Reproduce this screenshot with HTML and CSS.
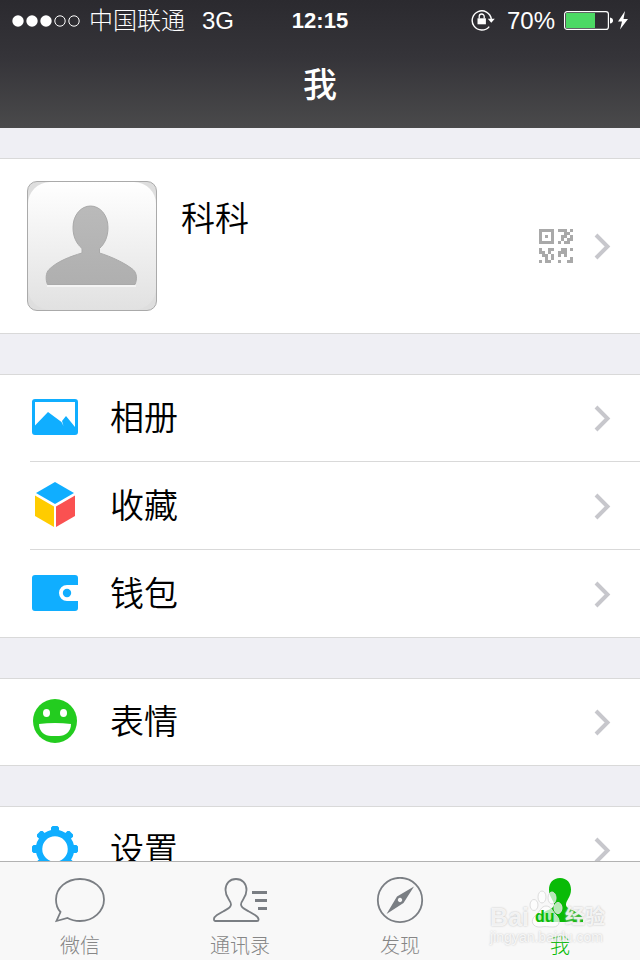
FILE: index.html
```html
<!DOCTYPE html>
<html lang="zh-CN">
<head>
<meta charset="utf-8">
<meta name="viewport" content="width=device-width, initial-scale=1">
<title>我</title>
<link rel="stylesheet" href="styles.css">
</head>
<body>
<header class="top">
  <div class="status">
    <div class="status-left">
      <svg class="signal" viewBox="0 0 68 12" width="68" height="12" aria-hidden="true">
        <g fill="#fff"><circle cx="6" cy="6" r="5.7"/><circle cx="20" cy="6" r="5.7"/><circle cx="34" cy="6" r="5.7"/></g>
        <g fill="none" stroke="#fff"><circle cx="48" cy="6" r="5.2"/><circle cx="62" cy="6" r="5.2"/></g>
      </svg>
      <span class="carrier">中国联通</span>
      <span>3G</span>
    </div>
    <time class="clock">12:15</time>
    <div class="status-right">
      <svg class="lock" viewBox="0 0 24 22" width="24" height="22" aria-hidden="true">
        <path d="M18.2 16.6A9.6 9.6 0 1 1 20.3 9" fill="none" stroke="#fff" stroke-width="1.4"/>
        <path d="M16.8 8.8h7L20.3 12.8z" fill="#fff"/>
        <path d="M6.5 8.3h8.400v6H6.500z" fill="#fff"/>
        <path d="M8.2 8.5V6.500a2.500 2.500 0 0 1 5 0v2" fill="none" stroke="#fff" stroke-width="1.3"/>
      </svg>
      <span class="percent">70%</span>
      <svg viewBox="0 0 64 22" width="64" height="22" aria-hidden="true">
        <rect x=".6" y="1.600" width="43.800" height="17.800" rx="2.500" fill="none" stroke="#fff" stroke-width="1.200"/>
        <rect x="2" y="3" width="29" height="15" fill="#4cd964"/>
        <path d="M46 7.500q3 .5 3 3t-3 3z" fill="#fff"/>
        <path d="M61 1L54 11.500h4L56 19.500L64 9h-4.500z" fill="#fff"/>
      </svg>
    </div>
  </div>
  <h1 class="title">我</h1>
</header>

<main class="content">
  <section class="group">
    <a class="profile" href="#profile">
      <svg class="avatar" viewBox="0 0 130 130" width="130" height="130" role="img" aria-label="头像">
        <defs>
          <linearGradient id="tile" x1="0" y1="0" x2="0" y2="1"><stop offset="0" stop-color="#fff"/><stop offset="1" stop-color="#e1e1e1"/></linearGradient>
          <linearGradient id="person" x1="0" y1="0" x2="0" y2="1"><stop offset="0" stop-color="#bababa"/><stop offset="1" stop-color="#afafaf"/></linearGradient>
        </defs>
        <rect x=".5" y=".5" width="129" height="129" rx="9.500" fill="#dedede"/>
        <rect x="1" y="1" width="128" height="128" rx="22" fill="url(#tile)"/>
        <rect x=".5" y=".5" width="129" height="129" rx="9.500" fill="none" stroke="#aaa"/>
        <path d="M20 105h89" stroke="#f4f4f4" stroke-width="2"/>
        <path d="M63.500 25C73 25 81 34 81 46.500C81 56 77.500 63 72.500 67.500V72C84 75.500 98 82 106 88.500C110.500 92.500 110 99 108 103.500H20.500C18.500 99 18.500 92 22 88.500C30 80.500 43 75.500 55 72V67.500C49.500 62.500 46 56 46 46.500C46 34 54 25 63.500 25z" fill="url(#person)" stroke="#aaa"/>
      </svg>
      <span class="name">科科</span>
      <svg class="qr" viewBox="0 0 34 34" width="34" height="34" aria-hidden="true" fill="#a9a9a9" shape-rendering="crispEdges">
        <path d="M0 0h15v15H0zM3 3v9h9V3zM6 6h3v3H6z" fill-rule="evenodd"/>
        <path d="M19 0h9v3h-9zM31 0h3v3h-3zM25 3h6v3h-6zM22 6h6v3h-6zM31 6h3v3h-3zM22 9h3v3h-3zM28 9h6v3h-6zM19 12h3v3h-3zM25 12h6v3h-6z"/>
        <path d="M0 19h3v3H0zM9 19h6v3H9zM0 22h6v3H0zM9 22h3v3H9zM3 25h6v3H3zM12 25h3v3h-3zM6 28h3v3H6zM12 28h3v3h-3zM0 31h3v3H0zM6 31h6v3H6z"/>
        <path d="M22 19h6v3h-6zM31 19h3v3h-3zM19 22h9v3h-9zM19 25h3v3h-3zM25 25h3v3h-3zM31 28h3v3h-3zM19 31h3v3h-3zM28 31h6v3h-6z"/>
      </svg>
      <svg class="chevron" viewBox="0 0 16 26" width="16" height="26" aria-hidden="true"><path d="M2 2l11.500 11.500L2 25"/></svg>
    </a>
  </section>

  <ul class="group">
    <li><a class="row" href="#album">
      <svg class="icon" viewBox="0 1 46 46" width="46" height="46" aria-hidden="true">
        <path d="M3 5h40a3 3 0 0 1 3 3v30a3 3 0 0 1-3 3H3a3 3 0 0 1-3-3V8a3 3 0 0 1 3-3zM3 8v23.500L16 18l13.500 10L31.500 32L30 27L34 22l9 11V8z" fill="#10aeff" fill-rule="evenodd"/>
      </svg>
      <span class="label">相册</span>
      <svg class="chevron" viewBox="0 0 16 26" width="16" height="26" aria-hidden="true"><path d="M2 2l11.500 11.500L2 25"/></svg>
    </a></li>
    <li><a class="row" href="#favorites">
      <svg class="icon" viewBox="0 1 46 46" width="46" height="46" aria-hidden="true">
        <path d="M23 0L42 11L23 22L4 11z" fill="#10aeff"/>
        <path d="M3 13.500L22 24.500V45L3 34z" fill="#fc0"/>
        <path d="M43 13.500L24 24.500V45L43 34z" fill="#fa5151"/>
      </svg>
      <span class="label">收藏</span>
      <svg class="chevron" viewBox="0 0 16 26" width="16" height="26" aria-hidden="true"><path d="M2 2l11.500 11.500L2 25"/></svg>
    </a></li>
    <li><a class="row" href="#wallet">
      <svg class="icon" viewBox="0 1 46 46" width="46" height="46" aria-hidden="true">
        <path d="M3 5h40a3 3 0 0 1 3 3v7H35a8 8 0 0 0 0 16h11v7a3 3 0 0 1-3 3H3a3 3 0 0 1-3-3V8a3 3 0 0 1 3-3z" fill="#10aeff"/>
        <circle cx="35" cy="23" r="4.200" fill="#10aeff"/>
      </svg>
      <span class="label">钱包</span>
      <svg class="chevron" viewBox="0 0 16 26" width="16" height="26" aria-hidden="true"><path d="M2 2l11.500 11.500L2 25"/></svg>
    </a></li>
  </ul>

  <ul class="group">
    <li><a class="row" href="#stickers">
      <svg class="icon" viewBox="0 0 46 46" width="46" height="46" aria-hidden="true">
        <circle cx="23" cy="22" r="22" fill="#23cc1f"/>
        <ellipse cx="14.500" cy="14" rx="3.500" ry="4" fill="#fff"/><ellipse cx="31.500" cy="14" rx="3.500" ry="4" fill="#fff"/>
        <path d="M7 25q16-2 32 0c0 8-6 12-12 12h-8C13 37 7 33 7 25z" fill="#fff"/>
      </svg>
      <span class="label">表情</span>
      <svg class="chevron" viewBox="0 0 16 26" width="16" height="26" aria-hidden="true"><path d="M2 2l11.500 11.500L2 25"/></svg>
    </a></li>
  </ul>

  <ul class="group">
    <li><a class="row" href="#settings">
      <svg class="icon" viewBox="0 0 46 46" width="46" height="46" aria-hidden="true">
        <circle cx="23" cy="22" r="16" fill="none" stroke="#10aeff" stroke-width="6.500"/>
        <g fill="#10aeff">
          <path id="teeth" d="M20.500-1h5l1.500 1.500v3.500l1.500 2h-11l1.500-2V.5zM20.500 45h5l1.500-1.500v-3.500l1.500-2h-11l1.500 2v3.500z"/>
          <use href="#teeth" transform="rotate(45 23 22)"/><use href="#teeth" transform="rotate(90 23 22)"/><use href="#teeth" transform="rotate(135 23 22)"/>
        </g>
      </svg>
      <span class="label">设置</span>
      <svg class="chevron" viewBox="0 0 16 26" width="16" height="26" aria-hidden="true"><path d="M2 2l11.500 11.500L2 25"/></svg>
    </a></li>
  </ul>
</main>

<nav class="tabs">
  <a class="tab" href="#chats">
    <svg viewBox="0 0 56 48" width="56" height="48" aria-hidden="true" fill="none" stroke="#7a7e83" stroke-width="1.800">
      <path d="M28 2C41.500 2 52 11 52 22.500S41.500 44 28 44C23.500 44 19 43 15.500 41L4.500 44L8.500 35C5 31.500 4 27.500 4 22.500C4 11 14.500 2 28 2z"/>
    </svg>
    <span>微信</span>
  </a>
  <a class="tab" href="#contacts">
    <svg viewBox="0 0 56 48" width="56" height="48" aria-hidden="true" fill="none" stroke="#7a7e83" stroke-width="1.800">
      <path d="M24 2C30.500 2 34.500 6.500 34.500 13C34.500 21 29 23 29 27.500C29 31 33 32 37 34.500L43 38Q47 40.500 46.500 43Q46.500 44 45 44H3.500Q2 44 2 42.500Q1.500 40.500 5 38L11 34.500C15 32 19 31 19 27.500C19 23 13.500 21 13.500 13C13.500 6.500 17.500 2 24 2z"/>
      <path d="M40 15.500h15M43 23.500h12M46 31.500h9" stroke-width="3"/>
    </svg>
    <span>通讯录</span>
  </a>
  <a class="tab" href="#discover">
    <svg viewBox="0 0 56 48" width="56" height="48" aria-hidden="true">
      <circle cx="28" cy="23" r="22.200" fill="none" stroke="#7a7e83" stroke-width="1.800"/>
      <path d="M42 9.500L31.500 26L14.500 37L25 19.500zM28 20.800a2.200 2.200 0 1 0 .01 0z" fill="#7a7e83" fill-rule="evenodd"/>
    </svg>
    <span>发现</span>
  </a>
  <a class="tab active" href="#me" aria-current="page">
    <svg viewBox="0 0 56 48" width="56" height="48" aria-hidden="true">
      <path d="M28 1C35 1 39 6 39 12.500C39 20.500 34 23 34 27.500C34 31 38 32 42 34L48 37.500Q51.500 40 51 45H5Q4.500 40 8 37.500L14 34C18 32 22 31 22 27.500C22 23 17 20.500 17 12.500C17 6 21 1 28 1z" fill="#09bb07"/>
    </svg>
    <span>我</span>
  </a>
  <div class="watermark">
    <div class="mark-brand">
      <span>Bai</span>
      <span class="paw">
        <svg viewBox="0 0 36 40" width="36" height="40" aria-hidden="true"><g fill="#fff" fill-opacity=".7" stroke="#ddd"><ellipse cx="5" cy="16" rx="4" ry="5.500"/><ellipse cx="13" cy="8" rx="4" ry="6"/><ellipse cx="23" cy="9" rx="4" ry="6"/><ellipse cx="29" cy="19" rx="4" ry="5.500"/><path d="M17 17C22 17 23 22 27 26C32 31 31 38 24 38C19 38 16 37 12 38C3 39 1 31 6 27C11 23 12 17 17 17z"/></g></svg>
        <span class="du">du</span>
      </span>
      <span class="mark-cjk">经验</span>
    </div>
    <div class="mark-url">jingyan.baidu.com</div>
  </div>
</nav>
</body>
</html>
```

FILE: styles.css
```css
* { box-sizing: border-box; }

body {
  margin: 0;
  height: 100vh;
  display: flex;
  flex-direction: column;
  background: #efeff4;
  color: #000;
  font-family: "Liberation Sans", "Noto Sans CJK SC", sans-serif;
  font-weight: 300;
}

a { color: inherit; text-decoration: none; }
svg { display: block; flex: none; }

.top {
  flex: none;
  height: 128px;
  background: linear-gradient(#2b2a2f, #353439 45%, #4a4a4b);
  color: #fff;
}

.status {
  height: 42px;
  padding: 0 12px;
  display: grid;
  grid-template-columns: 1fr auto 1fr;
  align-items: center;
  font-size: 24px;
  line-height: 42px;
}

.status-left, .status-right { display: flex; align-items: center; }
.status-left { gap: 9px; }
.carrier { margin-right: 8px; }
.status-right { justify-content: flex-end; gap: 9px; }
.lock { margin-right: 3px; }
.clock { font-size: 22px; font-weight: 700; }

.title {
  margin: 0;
  font-size: 34px;
  font-weight: 500;
  line-height: 86px;
  text-align: center;
}

.content {
  flex: 1;
  min-height: 0;
  overflow-y: auto;
  scrollbar-width: none;
  padding-top: 30px;
}

.group {
  margin: 0 0 40px;
  padding: 0;
  list-style: none;
  background: #fff;
  border: solid #d9d9d9;
  border-width: 1px 0;
}

.profile {
  display: flex;
  align-items: center;
  height: 174px;
  padding: 0 30px 0 27px;
}

.name {
  flex: 1;
  align-self: flex-start;
  margin: 36px 0 0 24px;
  font-size: 34px;
  font-weight: 350;
  line-height: 48px;
}

.qr { margin-right: 21px; }

.chevron { fill: none; stroke: #c7c7cc; stroke-width: 4; overflow: visible; }
.icon { overflow: visible; }

.row {
  display: flex;
  align-items: center;
  height: 86px;
  padding: 0 30px 0 2px;
  margin-left: 30px;
}

li + li .row { height: 88px; border-top: 1px solid #d9d9d9; }

.label {
  flex: 1;
  margin-left: 32px;
  font-size: 34px;
  font-weight: 350;
  line-height: 48px;
}

.tabs {
  position: relative;
  flex: none;
  display: grid;
  grid-template-columns: repeat(4, 1fr);
  height: 99px;
  border-top: 1px solid #b2b2b2;
  background: #f8f8f8;
  color: #868686;
}

.tab {
  display: flex;
  flex-direction: column;
  align-items: center;
  padding-top: 15px;
  font-size: 20px;
  line-height: 43px;
}

.active { color: #09bb07; }

.watermark {
  position: absolute;
  right: 35px;
  bottom: 15px;
  color: rgba(255, 255, 255, .8);
  text-shadow: 0 0 2px #bbb;
  pointer-events: none;
}

.mark-brand {
  display: flex;
  align-items: flex-end;
  font-size: 25px;
  font-weight: 700;
  line-height: 24px;
}

.paw { position: relative; }
.du { position: absolute; left: 6px; bottom: 4px; color: #09bb07; font-size: 16px; line-height: 16px; text-shadow: none; }
.mark-cjk { font-size: 20px; }
.mark-url { font-size: 14px; line-height: 16px; }
```
